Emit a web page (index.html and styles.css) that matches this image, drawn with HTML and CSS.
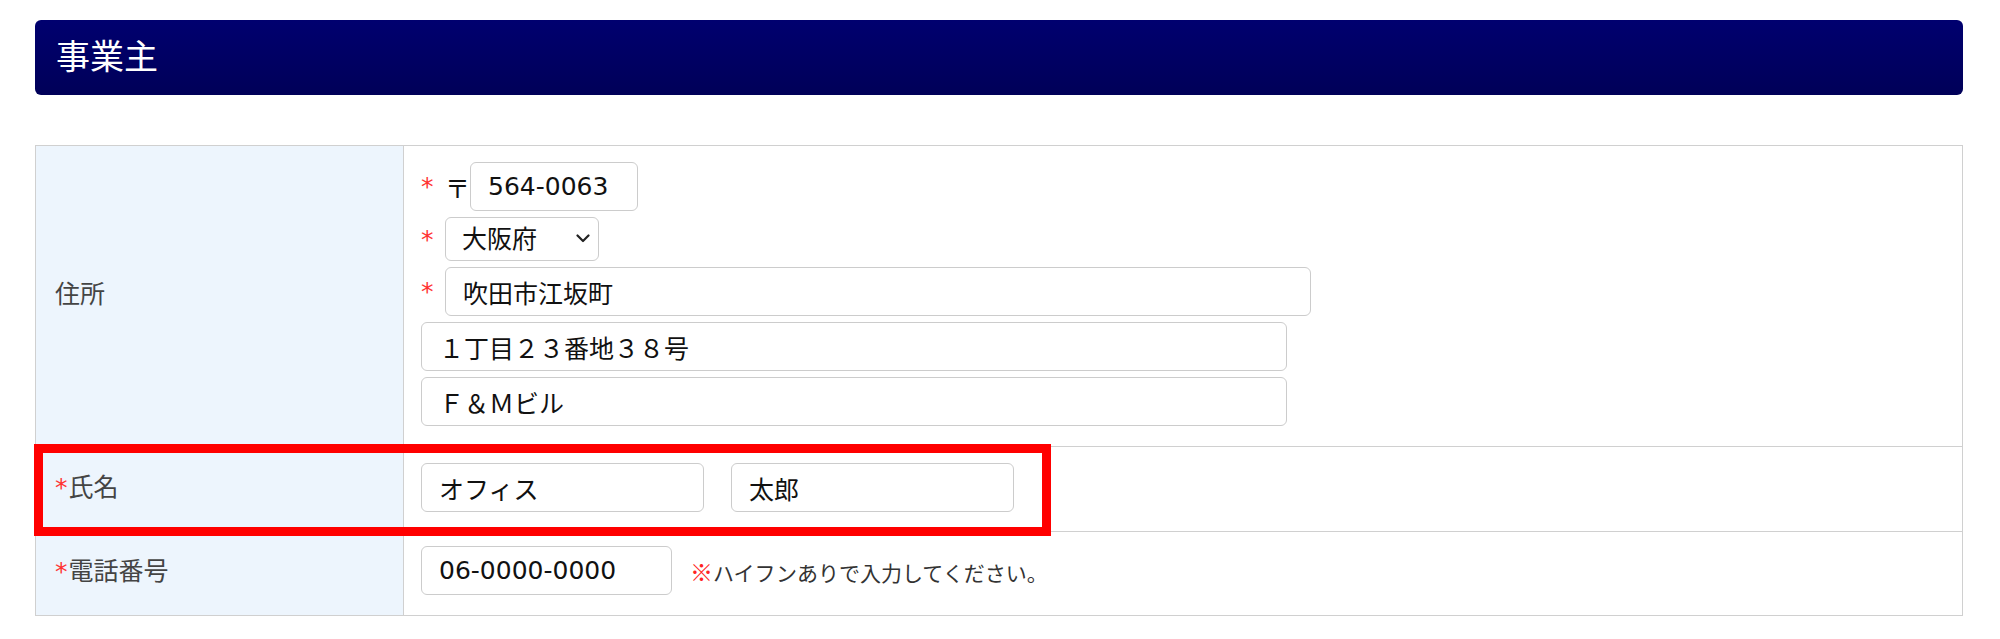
FILE: index.html
```html
<!DOCTYPE html>
<html lang="ja">
<head>
    <meta charset="UTF-8">
    <title>事業主</title>
    <link rel="stylesheet" href="styles.css">
</head>
<body>
    <div class="wrap">
        <h2 class="section-title">事業主</h2>

        <div class="form-box">
            <table class="form-table">
                <tr class="row-address">
                    <th>住所</th>
                    <td>
                        <div class="addr-lines">
                            <div class="line">
                                <span class="req">*</span><span class="zip-mark">〒</span><input class="zip" type="text" value="564-0063">
                            </div>
                            <div class="line">
                                <span class="req">*</span>
                                <span class="select-wrap">
                                    <select class="pref">
                                        <option>大阪府</option>
                                    </select>
                                    <svg class="chevron" width="14" height="9" viewBox="0 0 14 9"><polyline points="1.5,1.5 7,7 12.5,1.5" fill="none" stroke="#222" stroke-width="2.2" stroke-linecap="round" stroke-linejoin="round"/></svg>
                                </span>
                            </div>
                            <div class="line">
                                <span class="req">*</span><input class="addr" type="text" value="吹田市江坂町">
                            </div>
                            <input class="addr" type="text" value="１丁目２３番地３８号">
                            <input class="addr" type="text" value="Ｆ＆Ｍビル">
                        </div>
                    </td>
                </tr>
                <tr class="row-name">
                    <th><span class="req-label">*</span>氏名</th>
                    <td>
                        <div class="line name-line">
                            <input class="name" type="text" value="オフィス">
                            <input class="name" type="text" value="太郎">
                        </div>
                    </td>
                </tr>
                <tr class="row-tel">
                    <th><span class="req-label">*</span>電話番号</th>
                    <td>
                        <div class="line">
                            <input class="tel" type="text" value="06-0000-0000">
                            <span class="note"><b>※</b>ハイフンありで入力してください。</span>
                        </div>
                    </td>
                </tr>
            </table>

            <!-- 説明用の赤枠 -->
            <div class="highlight"></div>
        </div>
    </div>
</body>
</html>
```

FILE: styles.css
```css
body { margin: 0; background: #fff; font-family: "DejaVu Sans", "Noto Sans CJK JP", sans-serif; }
.wrap { padding: 20px 0 0 35px; width: 1928px; }

.section-title {
    margin: 0 0 50px;
    height: 75px;
    padding: 0 0 6px 21px;
    box-sizing: border-box;
    display: flex;
    align-items: center;
    background: linear-gradient(#00006f, #000058);
    border-radius: 6px;
    color: #fff;
    font-family: "Noto Sans CJK JP", sans-serif;
    font-size: 34px;
    font-weight: normal;
}

.form-box { position: relative; }
.form-table { width: 1928px; border-collapse: collapse; table-layout: fixed; }
.form-table th, .form-table td { border: 1px solid #d0d0d0; }
.form-table th {
    width: 348px;
    padding: 0 0 9px 19px;
    background: #edf5fd;
    color: #444;
    font-size: 25px;
    font-weight: normal;
    text-align: left;
    vertical-align: middle;
}
.form-table td { padding: 16px 17px 19px; vertical-align: top; }
.row-address td { padding-bottom: 20px; }
.row-tel td { padding-top: 14px; padding-bottom: 20px; }

.addr-lines { display: flex; flex-direction: column; align-items: flex-start; gap: 6px; }
.line { display: flex; align-items: center; }
.req { display: inline-block; width: 24px; color: #f33; font-size: 25px; }
.req-label { color: #f33; margin-right: 1px; }
.zip-mark { width: 25px; font-size: 25px; color: #111; font-family: "Noto Sans CJK JP", sans-serif; }

input, select {
    box-sizing: border-box;
    height: 49px;
    margin: 0;
    padding: 0 17px;
    border: 1px solid #ccc;
    border-radius: 6px;
    background: #fff;
    color: #111;
    font-family: "DejaVu Sans", "Noto Sans CJK JP", sans-serif;
    font-size: 25px;
}
.zip { width: 168px; }
.addr { width: 866px; }
.name { width: 283px; }
.name-line { gap: 27px; }
.tel { width: 251px; }

.select-wrap { position: relative; display: inline-block; }
.pref { width: 154px; height: 44px; padding: 0 16px; appearance: none; -webkit-appearance: none; display: block; }
.chevron { position: absolute; right: 9px; top: 17px; pointer-events: none; }

.note { margin-left: 18px; font-size: 21px; color: #333; font-family: "Noto Sans CJK JP", sans-serif; }
.note b { color: #f22; font-size: 23px; font-weight: 900; }

.highlight {
    position: absolute;
    left: -1px;
    top: 299px;
    width: 1017px;
    height: 92px;
    box-sizing: border-box;
    border: 9px solid #f00;
}
```
